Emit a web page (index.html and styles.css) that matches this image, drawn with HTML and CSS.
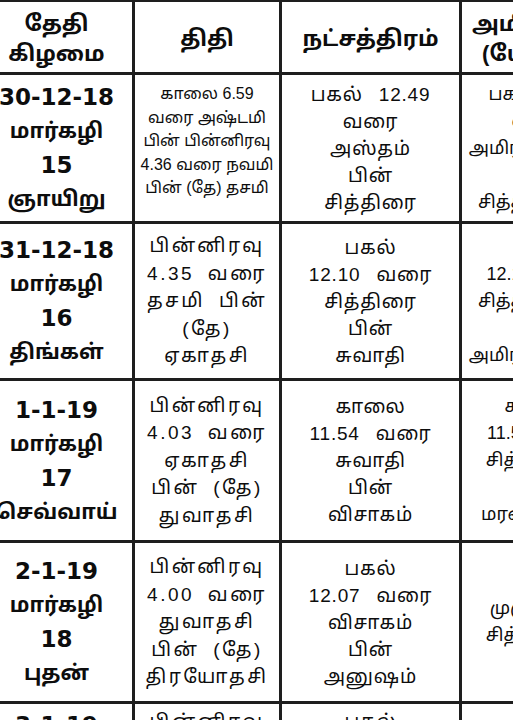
FILE: index.html
```
<!DOCTYPE html>
<html lang="ta">
<head>
<meta charset="utf-8">
<title>பஞ்சாங்கம்</title>
<link rel="stylesheet" href="styles.css">
</head>
<body>
<div class="sheet">
  <div class="grid">
    <div class="cell head"><div>தேதி</div><div>கிழமை</div></div>
    <div class="cell head"><div>திதி</div></div>
    <div class="cell head"><div>நட்சத்திரம்</div></div>
    <div class="cell head"><div>அமிர்தாதி</div><div>(யோகம்)</div></div>

    <div class="cell date"><div class="d">30-12-18</div><div>மார்கழி</div><div class="n">15</div><div>ஞாயிறு</div></div>
    <div class="cell small"><div>காலை 6.59</div><div>வரை அஷ்டமி</div><div>பின் பின்னிரவு</div><div>4.36 வரை நவமி</div><div>பின் (தே) தசமி</div></div>
    <div class="cell txt"><div>பகல் 12.49</div><div>வரை</div><div>அஸ்தம்</div><div>பின்</div><div>சித்திரை</div></div>
    <div class="cell yoga"><div>பகல் 12.49</div><div>வரை</div><div>அமிர்தயோகம்</div><div>பின்</div><div>சித்தயோகம்</div></div>

    <div class="cell date"><div class="d">31-12-18</div><div>மார்கழி</div><div class="n">16</div><div>திங்கள்</div></div>
    <div class="cell tithi"><div>பின்னிரவு</div><div>4.35 வரை</div><div>தசமி பின்</div><div>(தே)</div><div>ஏகாதசி</div></div>
    <div class="cell txt"><div>பகல்</div><div>12.10 வரை</div><div>சித்திரை</div><div>பின்</div><div>சுவாதி</div></div>
    <div class="cell yoga"><div>பகல்</div><div>12.10 வரை</div><div>சித்தயோகம்</div><div>பின்</div><div>அமிர்தயோகம்</div></div>

    <div class="cell date"><div class="d">1-1-19</div><div>மார்கழி</div><div class="n">17</div><div>செவ்வாய்</div></div>
    <div class="cell tithi"><div>பின்னிரவு</div><div>4.03 வரை</div><div>ஏகாதசி</div><div>பின் (தே)</div><div>துவாதசி</div></div>
    <div class="cell txt"><div>காலை</div><div>11.54 வரை</div><div>சுவாதி</div><div>பின்</div><div>விசாகம்</div></div>
    <div class="cell yoga"><div>காலை</div><div>11.54 வரை</div><div>சித்தயோக</div><div>பின்</div><div>மரணயோக</div></div>

    <div class="cell date"><div class="d">2-1-19</div><div>மார்கழி</div><div class="n">18</div><div>புதன்</div></div>
    <div class="cell tithi"><div>பின்னிரவு</div><div>4.00 வரை</div><div>துவாதசி</div><div>பின் (தே)</div><div>திரயோதசி</div></div>
    <div class="cell txt"><div>பகல்</div><div>12.07 வரை</div><div>விசாகம்</div><div>பின்</div><div>அனுஷம்</div></div>
    <div class="cell yoga"><div>முழுவதும்</div><div>சித்தயோக</div></div>

    <div class="cell date top"><div class="d">3-1-19</div><div>மார்கழி</div><div class="n">19</div><div>வியாழன்</div></div>
    <div class="cell tithi top"><div>பின்னிரவு</div><div>4.21 வரை</div></div>
    <div class="cell txt top"><div>பகல்</div><div>12.43 வரை</div></div>
    <div class="cell yoga top"><div>பகல்</div><div>12.43 வரை</div></div>
  </div>
</div>
</body>
</html>
```

FILE: styles.css
```
html, body {
  margin: 0;
  padding: 0;
  background: #ffffff;
  overflow: hidden;
}
.sheet {
  width: 513px;
  height: 720px;
  overflow: hidden;
}
.grid {
  display: grid;
  grid-template-columns: 151px 144px 177px 150px;
  grid-template-rows: 70px 146px 154px 159px 158px 120px;
  gap: 3px;
  padding-top: 2px;
  background: #1e1e1e;
  margin-left: -19px;
  width: max-content;
  font-family: "Liberation Sans", "Noto Sans Tamil", "Lohit Tamil", "Noto Sans", sans-serif;
  color: #0d0d0d;
}
.cell {
  background: #ffffff;
  display: flex;
  flex-direction: column;
  align-items: center;
  justify-content: center;
  white-space: nowrap;
  text-align: center;
}
.head {
  font-weight: bold;
  font-size: 22px;
  line-height: 30px;
  padding-top: 4px;
}
.date {
  font-weight: bold;
  font-size: 21px;
  line-height: 34px;
}
.date .d, .date .n {
  font-family: "DejaVu Sans", "Liberation Sans", sans-serif;
  font-size: 23px;
}
.small {
  font-size: 16px;
  line-height: 23.5px;
  padding-bottom: 14px;
}
.tithi {
  font-size: 19px;
  line-height: 27.5px;
  letter-spacing: 2.5px;
  word-spacing: 6px;
}
.txt {
  font-size: 19px;
  line-height: 27px;
  letter-spacing: 0.8px;
  word-spacing: 10px;
}
.yoga {
  font-size: 18px;
  line-height: 27px;
}
.top {
  justify-content: flex-start;
  padding-top: 4px;
}
```
